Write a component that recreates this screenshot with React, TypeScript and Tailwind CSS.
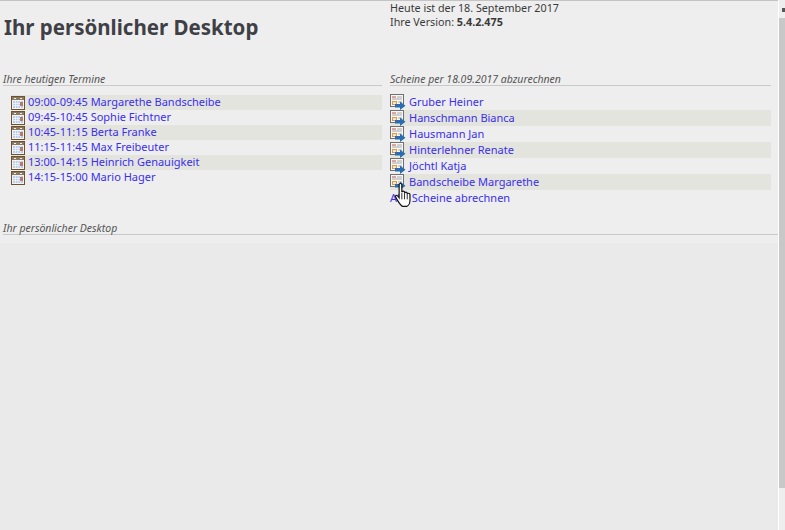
import React from "react"

const termine = [
  "09:00-09:45 Margarethe Bandscheibe",
  "09:45-10:45 Sophie Fichtner",
  "10:45-11:15 Berta Franke",
  "11:15-11:45 Max Freibeuter",
  "13:00-14:15 Heinrich Genauigkeit",
  "14:15-15:00 Mario Hager",
]

const scheine = [
  "Gruber Heiner",
  "Hanschmann Bianca",
  "Hausmann Jan",
  "Hinterlehner Renate",
  "Jöchtl Katja",
  "Bandscheibe Margarethe",
]

function CalendarIcon() {
  return (
    <svg width="14" height="14" viewBox="0 0 14 14" className="shrink-0">
      <rect x="0.500" y="0.500" width="13" height="13" fill="#f3f3f3" stroke="#6e5230" />
      <rect x="1" y="1" width="12" height="3" fill="#8a7a62" />
      <path d="M3 2.500h2M9 2.500h2" stroke="#eeeeee" />
      <rect x="2" y="5" width="10" height="7" fill="#b6cdee" />
      <path d="M2 7.500h10M2 9.500h10M4.500 5v7M7 5v7M9.500 5v7" stroke="#f4f4f4" strokeWidth="0.8" />
      <rect x="9" y="6" width="3" height="4" fill="#b87a6c" />
    </svg>
  )
}

function ScheinIcon() {
  return (
    <svg width="16" height="16" viewBox="0 0 16 16" className="shrink-0">
      <rect x="0.500" y="0.500" width="13" height="12" fill="#f7f7f7" stroke="#6f6f6f" />
      <path d="M2 3h4" stroke="#c8503c" />
      <path d="M7 3h5M2 5h10" stroke="#a8a8a8" />
      <rect x="2.500" y="7.500" width="4" height="3" fill="#f7e6c4" stroke="#dd9a48" />
      <path d="M8 8h4" stroke="#a8a8a8" />
      <path d="M5 10h5V7.500l5.500 4.250L10 16v-2.500H5z" fill="#2a6db0" />
    </svg>
  )
}

function HandCursor() {
  return (
    <svg width="20" height="26" viewBox="0 0 18 24" className="absolute left-[394px] top-[182px]">
      <path
        d="M4.500 2.500c0-1.500 2.500-1.500 2.500 0v7c0-1.500 2.500-1.500 2.500 0v1c0-1.500 2.500-1.500 2.500 0v1c0-1.500 2.500-1.500 2.500 0v5.500c0 2.500-1.500 5-3 5.500H8c-2-.5-3.500-3-5.500-6.500-1-1.500-2-3-1-3.500s2 .5 3 2z"
        fill="#fff"
        stroke="#111"
        strokeWidth="1.100"
      />
      <path d="M7 10v6M9.500 10.500V16M12 11.500V16" stroke="#111" strokeWidth="0.800" />
    </svg>
  )
}

function Heading({ children }: { children: React.ReactNode }) {
  return <div className="h-[14px] border-b border-[#c9c9c9] pt-px text-[10.500px] leading-[12px] italic text-[#555]">{children}</div>
}

export default function App() {
  return (
    <div className="relative flex h-[530px] w-[785px] overflow-hidden bg-[#eeeeee] font-['Noto_Sans',sans-serif] text-[11px] text-[#3a3a3a]">
      <div className="flex w-[778px] flex-col border-t border-[#c4c4c4]">
        <div className="flex h-[71px]">
          <h1 className="mt-[12px] ml-[3px] w-[387px] pl-px text-[20.500px] leading-[28px] font-bold text-[#3f3f46]">Ihr persönlicher Desktop</h1>
          <div className="text-[10.750px] leading-[14px]">
            <div>Heute ist der 18. September 2017</div>
            <div>
              Ihre Version: <b>5.4.2.475</b>
            </div>
          </div>
        </div>

        <div className="flex h-[149px]">
          <div className="w-[390px] pl-[3px]">
            <div className="w-[379px]">
              <Heading>Ihre heutigen Termine</Heading>
            </div>
            <div className="mt-[9px] ml-[8px] w-[371px] text-[#3a2ff0]">
              {termine.map((t, i) => (
                <div key={t} className={`flex h-[15px] items-center gap-[3px] ${i % 2 === 0 ? "bg-[#e4e4df]" : ""}`}>
                  <CalendarIcon />
                  <span>{t}</span>
                </div>
              ))}
            </div>
          </div>
          <div className="w-[381px]">
            <Heading>Scheine per 18.09.2017 abzurechnen</Heading>
            <div className="mt-[8px] text-[#3a2ff0]">
              {scheine.map((s, i) => (
                <div key={s} className={`flex h-[16px] items-center gap-[3px] ${i % 2 === 1 ? "bg-[#e4e4df]" : ""}`}>
                  <ScheinIcon />
                  <span>{s}</span>
                </div>
              ))}
              <div className="flex h-[16px] items-center">
                <span>Alle Scheine abrechnen</span>
              </div>
            </div>
          </div>
        </div>

        <div className="pl-[3px]">
          <Heading>Ihr persönlicher Desktop</Heading>
        </div>
        <div className="mt-[8px] flex-1 bg-[#eaeaea]" />
      </div>
      <div className="w-px bg-white" />
      <div className="flex w-[6px] flex-col">
        <div className="flex h-[18px] items-start justify-end bg-[#eeeeee] pt-[8px]">
          <div className="h-[4px] w-[3px] bg-[#555]" />
        </div>
        <div className="h-[470px] bg-[#c8c8c8]" />
      </div>
      <HandCursor />
    </div>
  )
}
